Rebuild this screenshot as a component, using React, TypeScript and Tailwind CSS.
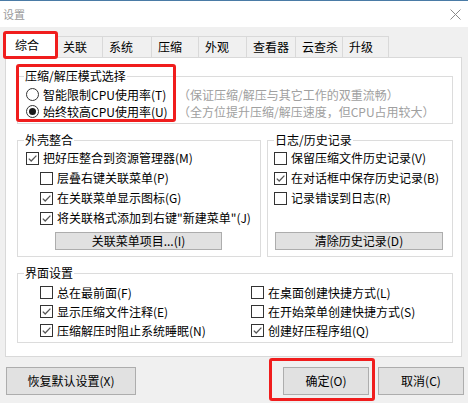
import { ReactNode } from "react";

interface Tab {
  label: string;
  width: string;
}

const tabs: Tab[] = [
  { label: "关联", width: "w-[46px]" },
  { label: "系统", width: "w-[49px]" },
  { label: "压缩", width: "w-[47px]" },
  { label: "外观", width: "w-[48px]" },
  { label: "查看器", width: "w-[49px]" },
  { label: "云查杀", width: "w-[47px]" },
  { label: "升级", width: "w-[46px]" },
];

function Checkbox({ checked }: { checked: boolean }) {
  return (
    <span className="w-[13px] h-[13px] shrink-0 border border-[#333] bg-white flex items-center justify-center">
      {checked && (
        <svg width="11" height="11" viewBox="0 0 11 11">
          <path d="M1.8 5.6 L4.2 8 L9.4 2.6" fill="none" stroke="#555" strokeWidth="1.3" />
        </svg>
      )}
    </span>
  );
}

function Radio({ checked }: { checked: boolean }) {
  return (
    <span className="w-[13px] h-[13px] shrink-0 rounded-full border border-[#333] bg-white flex items-center justify-center">
      {checked && <span className="w-[7px] h-[7px] rounded-full bg-[#1a1a1a]" />}
    </span>
  );
}

function CheckRow({ checked, label, className = "h-[20px]" }: { checked: boolean; label: string; className?: string }) {
  return (
    <div className={`flex items-center gap-[4px] ${className}`}>
      <Checkbox checked={checked} />
      <span className="whitespace-nowrap">{label}</span>
    </div>
  );
}

function Group({ title, className, children }: { title: string; className: string; children: ReactNode }) {
  return (
    <fieldset className={`border border-[#dcdcdc] p-0 m-0 min-w-0 ${className}`}>
      <legend className="ml-[6px] px-[1px] leading-[16px]">{title}</legend>
      {children}
    </fieldset>
  );
}

function Button({ label, className }: { label: string; className: string }) {
  return (
    <div className={`bg-[#e1e1e1] border border-[#adadad] flex items-center justify-center ${className}`}>
      {label}
    </div>
  );
}

export default function App() {
  return (
    <div className="w-[468px] h-[403px] bg-[#f0f0f0] text-[12px] text-black leading-[16px] font-['Noto_Sans_CJK_SC','Noto_Sans',sans-serif] overflow-hidden">
      <div className="h-px bg-[#4a7ba6]" />

      {/* Title bar */}
      <div className="h-[26px] bg-white flex items-center justify-between pl-[3px] pr-[6px]">
        <span className="text-[#9a9a9a] text-[11px]">设置</span>
        <svg width="11" height="11" viewBox="0 0 11 11" className="mr-[1px]">
          <path d="M0.5 0.5 L10.5 10.5 M10.5 0.5 L0.5 10.5" stroke="#8a8a8a" strokeWidth="1" />
        </svg>
      </div>

      <div className="pt-[6px] pl-[5px]">
        {/* Tabs */}
        <div className="flex items-end h-[24px]">
          <div className="relative z-10 w-[52px] h-[25px] -mb-px bg-white border-l border-t border-r border-[#d9d9d9] flex items-center pl-[9px] pb-[2px]">
            综合
            <div className="absolute -left-[3px] -top-[3px] w-[55px] h-[28px] border-[3px] border-[#f01d1d] rounded-[3px]" />
          </div>
          {tabs.map((tab) => (
            <div
              key={tab.label}
              className={`${tab.width} h-[21px] border-t border-r border-[#d9d9d9] flex items-center pl-[6px]`}
            >
              {tab.label}
            </div>
          ))}
        </div>

        {/* Panel */}
        <div className="w-[457px] h-[300px] bg-white border border-[#d9d9d9] pl-[11px] pt-[10px]">
          {/* Mode */}
          <Group title="压缩/解压模式选择" className="relative w-[436px]">
            <div className="pt-[2px] pb-[3px] pl-[8px]">
              <div className="flex items-center h-[17px]">
                <div className="w-[152px] flex items-center gap-[4px]">
                  <Radio checked={false} />
                  <span className="whitespace-nowrap">智能限制CPU使用率(T)</span>
                </div>
                <span className="text-[#a0a0a0] whitespace-nowrap">（保证压缩/解压与其它工作的双重流畅）</span>
              </div>
              <div className="flex items-center h-[17px]">
                <div className="w-[152px] flex items-center gap-[4px]">
                  <Radio checked={true} />
                  <span className="whitespace-nowrap">始终较高CPU使用率(U)</span>
                </div>
                <span className="text-[#a0a0a0] whitespace-nowrap">（全方位提升压缩/解压速度，但CPU占用较大）</span>
              </div>
            </div>
            <div className="absolute -left-[2px] -top-[20px] w-[160px] h-[58px] border-[3px] border-[#f01d1d] rounded-[3px]" />
          </Group>

          <div className="flex gap-[6px] mt-[8px] w-[436px]">
            {/* Shell */}
            <Group title="外壳整合" className="w-[244px]">
              <div className="pb-[6px]">
                <CheckRow checked={true} label="把好压整合到资源管理器(M)" className="h-[20px] pl-[8px]" />
                <CheckRow checked={false} label="层叠右键关联菜单(P)" className="h-[20px] pl-[22px]" />
                <CheckRow checked={true} label="在关联菜单显示图标(G)" className="h-[20px] pl-[22px]" />
                <CheckRow checked={true} label='将关联格式添加到右键"新建菜单"(J)' className="h-[20px] pl-[22px]" />
                <Button label="关联菜单项目...(I)" className="ml-[37px] mt-[4px] w-[167px] h-[18px]" />
              </div>
            </Group>

            {/* History */}
            <Group title="日志/历史记录" className="w-[186px]">
              <div className="pb-[6px] pl-[6px]">
                <CheckRow checked={false} label="保留压缩文件历史记录(V)" />
                <CheckRow checked={true} label="在对话框中保存历史记录(B)" />
                <CheckRow checked={false} label="记录错误到日志(R)" />
                <div className="h-[20px]" />
                <Button label="清除历史记录(D)" className="ml-[1px] mt-[4px] w-[168px] h-[18px]" />
              </div>
            </Group>
          </div>

          {/* Interface */}
          <Group title="界面设置" className="w-[436px] mt-[8px]">
            <div className="grid grid-cols-[211px_1fr] pl-[22px] pt-[2px] pb-[2px]">
              <CheckRow checked={false} label="总在最前面(F)" className="h-[19px]" />
              <CheckRow checked={false} label="在桌面创建快捷方式(L)" className="h-[19px]" />
              <CheckRow checked={true} label="显示压缩文件注释(E)" className="h-[19px]" />
              <CheckRow checked={false} label="在开始菜单创建快捷方式(S)" className="h-[19px]" />
              <CheckRow checked={true} label="压缩解压时阻止系统睡眠(N)" className="h-[19px]" />
              <CheckRow checked={true} label="创建好压程序组(Q)" className="h-[19px]" />
            </div>
          </Group>
        </div>

        {/* Action Buttons */}
        <div className="flex mt-[10px] pl-[1px]">
          <Button label="恢复默认设置(X)" className="w-[130px] h-[28px]" />
          <div className="relative ml-[147px]">
            <Button label="确定(O)" className="w-[86px] h-[28px]" />
            <div className="absolute -left-[14px] -top-[9px] w-[106px] h-[43px] border-[3px] border-[#f01d1d] rounded-[3px]" />
          </div>
          <Button label="取消(C)" className="ml-[9px] w-[86px] h-[28px]" />
        </div>
      </div>
    </div>
  );
}
